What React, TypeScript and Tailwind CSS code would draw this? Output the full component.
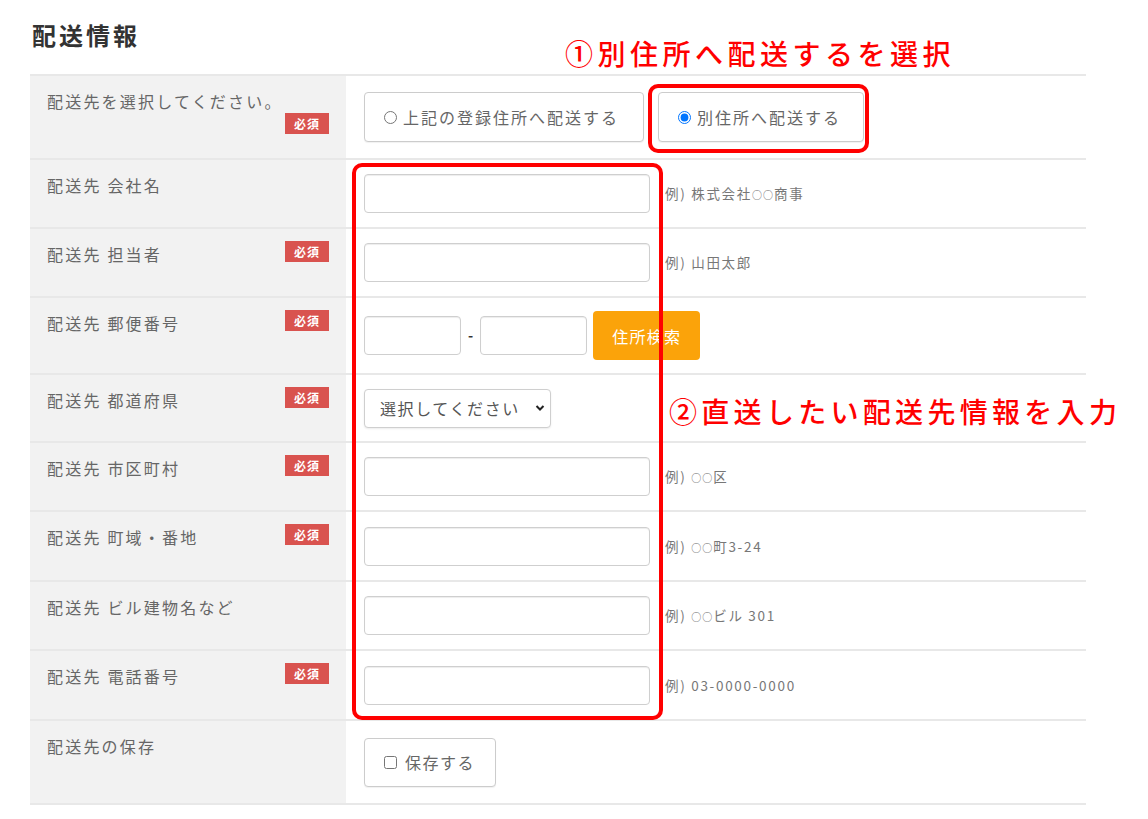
import React from "react";

const Badge = () => (
  <span className="flex h-[21px] w-[44px] shrink-0 items-center justify-center bg-[#d9534f] text-[12px] font-bold tracking-[1px] text-white">
    必須
  </span>
);

const Row = ({
  h,
  label,
  required,
  stacked,
  children,
}: {
  h: string;
  label: string;
  required?: boolean;
  stacked?: boolean;
  children?: React.ReactNode;
}) => (
  <div className={`flex border-b-2 border-[#e8e8e8] ${h}`}>
    <div
      className={`flex w-[316px] shrink-0 bg-[#f2f2f2] px-[17px] pt-[13px] ${
        stacked ? "flex-col items-end" : "items-start justify-between"
      }`}
    >
      <span className={`text-[16px] leading-[24px] tracking-[2.2px] text-[#666] ${stacked ? "self-start" : ""}`}>
        {label}
      </span>
      {required && (
        <div className={stacked ? "" : "-mt-px"}>
          <Badge />
        </div>
      )}
    </div>
    <div className="flex flex-1 items-center pl-[18px]">{children}</div>
  </div>
);

const TextInput = ({ w = "w-[286px]" }: { w?: string }) => (
  <input
    type="text"
    className={`${w} h-[39px] rounded-[4px] border border-[#cfcfcf] bg-white shadow-[inset_0_1px_1px_rgba(0,0,0,0.075)] outline-none`}
  />
);

const Example = ({ children }: { children: React.ReactNode }) => (
  <span className="ml-[15px] text-[13.5px] tracking-[1.7px] text-[#777]">{children}</span>
);

const Circles = () => <span className="text-[10px] tracking-[1px] text-[#666]">○○</span>;

export default function App() {
  return (
    <div className="relative min-h-[819px] w-[1148px] bg-white font-['Noto_Sans_CJK_JP','Noto_Sans',sans-serif]">
      <div className="pl-[30px] pt-[17px]">
        <h2 className="mb-[21px] pl-[2px] text-[24px] font-bold leading-[36px] tracking-[3px] text-[#333]">
          配送情報
        </h2>
        <div className="w-[1056px] border-t-2 border-[#e8e8e8]">
          <Row h="h-[84px]" label="配送先を選択してください。" required stacked>
            <div className="flex gap-[14px]">
              <label className="flex h-[50px] items-center gap-[6px] rounded-[4px] border border-[#cccccc] bg-white pl-[19px] pr-[24px] shadow-[0_1px_1px_rgba(0,0,0,0.06)]">
                <input type="radio" name="dest" className="m-0 h-[13px] w-[13px]" />
                <span className="text-[16px] tracking-[2px] text-[#666]">上記の登録住所へ配送する</span>
              </label>
              <label className="flex h-[50px] items-center gap-[6px] rounded-[4px] border border-[#cccccc] bg-white pl-[19px] pr-[22px] shadow-[0_1px_1px_rgba(0,0,0,0.06)]">
                <input type="radio" name="dest" defaultChecked className="m-0 h-[13px] w-[13px]" />
                <span className="text-[16px] tracking-[2px] text-[#666]">別住所へ配送する</span>
              </label>
            </div>
          </Row>
          <Row h="h-[69px]" label="配送先 会社名">
            <TextInput />
            <Example>
              例) 株式会社<Circles />商事
            </Example>
          </Row>
          <Row h="h-[69px]" label="配送先 担当者" required>
            <TextInput />
            <Example>例) 山田太郎</Example>
          </Row>
          <Row h="h-[77px]" label="配送先 郵便番号" required>
            <TextInput w="w-[97px]" />
            <span className="mx-[7px] text-[14px] font-bold text-[#333]">-</span>
            <TextInput w="w-[107px]" />
            <button className="ml-[6px] h-[49px] w-[107px] rounded-[4px] bg-[#fba30a] text-[16px] tracking-[1.2px] text-white">
              住所検索
            </button>
          </Row>
          <Row h="h-[68px]" label="配送先 都道府県" required>
            <div className="relative">
              <select className="h-[39px] w-[187px] appearance-none rounded-[4px] border border-[#cfcfcf] bg-white pl-[15px] text-[16px] tracking-[1.6px] text-[#555] shadow-[0_1px_2px_rgba(0,0,0,0.08)] outline-none">
                <option>選択してください</option>
              </select>
              <svg
                className="pointer-events-none absolute right-[6px] top-[15px]"
                width="10"
                height="8"
                viewBox="0 0 10 8"
              >
                <path d="M1.5 2 L5 5.5 L8.5 2" fill="none" stroke="#222" strokeWidth="2" />
              </svg>
            </div>
          </Row>
          <Row h="h-[69px]" label="配送先 市区町村" required>
            <TextInput />
            <Example>
              例) <Circles />区
            </Example>
          </Row>
          <Row h="h-[70px]" label="配送先 町域・番地" required>
            <TextInput />
            <Example>
              例) <Circles />町3-24
            </Example>
          </Row>
          <Row h="h-[69px]" label="配送先 ビル建物名など">
            <TextInput />
            <Example>
              例) <Circles />ビル 301
            </Example>
          </Row>
          <Row h="h-[70px]" label="配送先 電話番号" required>
            <TextInput />
            <Example>例) 03-0000-0000</Example>
          </Row>
          <Row h="h-[84px]" label="配送先の保存">
            <label className="flex h-[49px] items-center gap-[8px] rounded-[4px] border border-[#cccccc] bg-white pl-[19px] pr-[20px] shadow-[0_1px_1px_rgba(0,0,0,0.06)]">
              <input type="checkbox" className="m-0 h-[13px] w-[13px]" />
              <span className="text-[16px] tracking-[1.5px] text-[#666]">保存する</span>
            </label>
          </Row>
        </div>
      </div>

      {/* annotations */}
      <div className="absolute left-[565px] top-[37px] text-[28px] font-medium leading-[32px] tracking-[4.5px] text-[#ff0000]">
        ①別住所へ配送するを選択
      </div>
      <div className="absolute left-[669px] top-[395px] text-[28px] font-medium leading-[32px] tracking-[4.3px] text-[#ff0000]">
        ②直送したい配送先情報を入力
      </div>
      <div className="absolute left-[648px] top-[84px] h-[69px] w-[221px] rounded-[10px] border-4 border-[#ff0000]" />
      <div className="absolute left-[352px] top-[163px] h-[557px] w-[311px] rounded-[10px] border-4 border-[#ff0000]" />
    </div>
  );
}
